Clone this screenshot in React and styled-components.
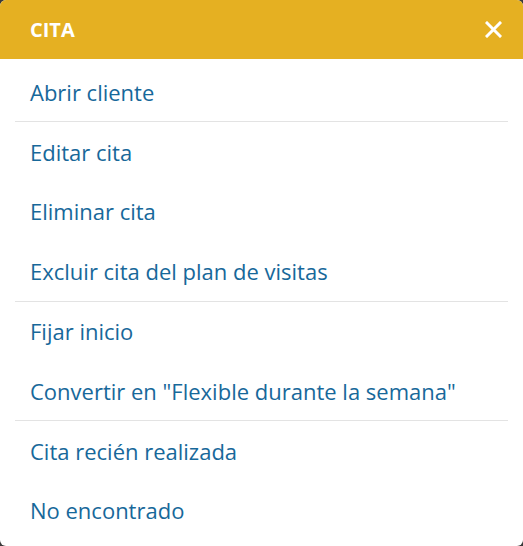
import React from 'react';
import styled, { createGlobalStyle } from 'styled-components';

const GlobalStyle = createGlobalStyle`
  html, body {
    margin: 0;
    padding: 0;
    background: #3a3a3a;
  }
  body {
    font-family: 'Open Sans', 'Noto Sans', sans-serif;
  }
`;

const Panel = styled.div`
  width: 523px;
  height: 546px;
  background: #ffffff;
  border-radius: 6px;
  overflow: hidden;
  display: flex;
  flex-direction: column;
`;

const Header = styled.div`
  height: 59px;
  flex-shrink: 0;
  background: #e5b022;
  display: flex;
  align-items: center;
  justify-content: space-between;
  padding: 0 21px 0 30px;
`;

const Title = styled.h2`
  margin: 0;
  color: #ffffff;
  font-size: 20px;
  font-weight: 700;
`;

const CloseButton = styled.button`
  border: 0;
  background: none;
  padding: 0;
  width: 17px;
  height: 17px;
  display: flex;
  cursor: pointer;
`;

const List = styled.div`
  padding-top: 3px;
`;

const Group = styled.div`
  margin: 0 15px;
  border-bottom: ${(props) => (props.last ? 'none' : '1px solid #e3e3e3')};
`;

const Item = styled.div`
  height: 59.4px;
  display: flex;
  align-items: center;
  padding-left: 15px;
  color: #17689a;
  font-size: 22px;
  cursor: pointer;
`;

const groups = [
  ['Abrir cliente'],
  ['Editar cita', 'Eliminar cita', 'Excluir cita del plan de visitas'],
  ['Fijar inicio', 'Convertir en "Flexible durante la semana"'],
  ['Cita recién realizada', 'No encontrado'],
];

const App = () => (
  <>
    <GlobalStyle />
    <Panel>
      <Header>
        <Title>CITA</Title>
        <CloseButton aria-label="Cerrar">
          <svg width="17" height="17" viewBox="0 0 17 17">
            <path d="M2 2 L15 15 M15 2 L2 15" stroke="#fff" strokeWidth="3" strokeLinecap="square" />
          </svg>
        </CloseButton>
      </Header>
      <List>
        {groups.map((items, i) => (
          <Group key={i} last={i === groups.length - 1}>
            {items.map((label) => (
              <Item key={label}>{label}</Item>
            ))}
          </Group>
        ))}
      </List>
    </Panel>
  </>
);

export default App;
